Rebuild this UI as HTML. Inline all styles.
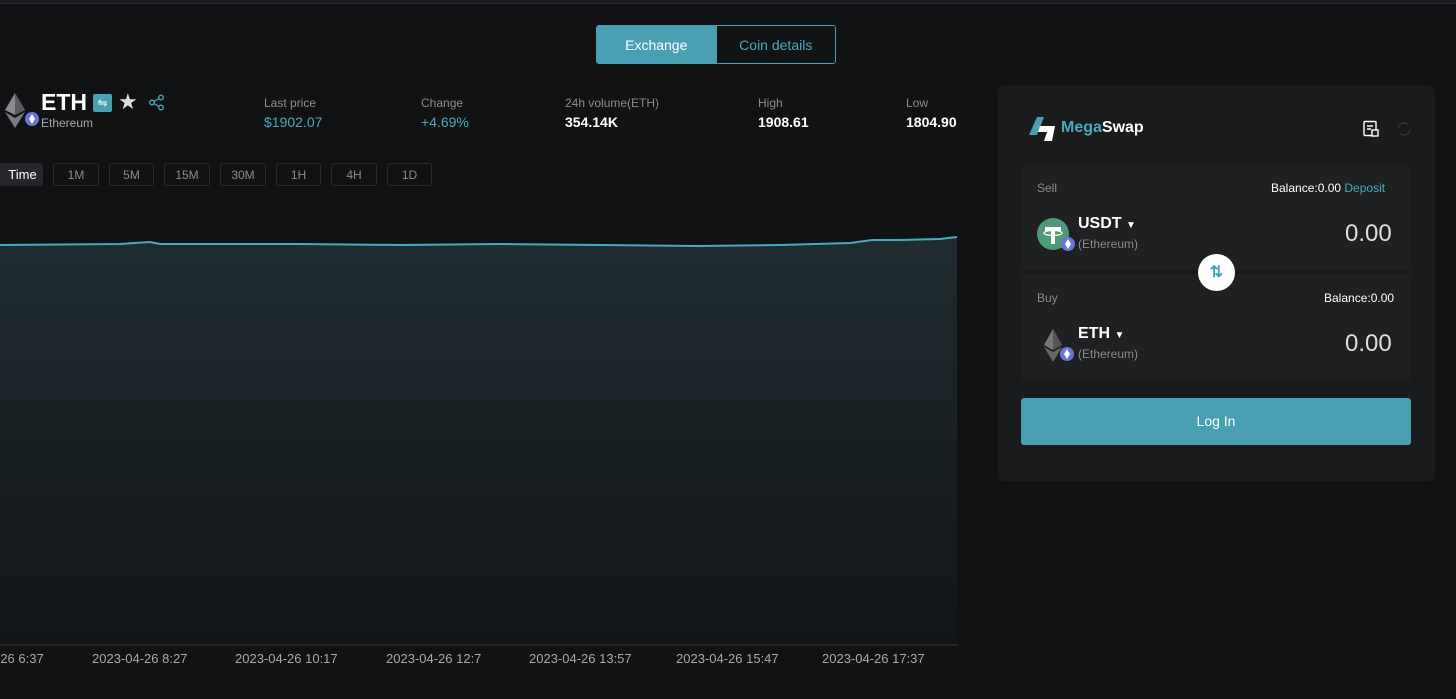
<!DOCTYPE html>
<html><head><meta charset="utf-8"><style>
*{margin:0;padding:0;box-sizing:border-box}
body{width:1456px;height:699px;background:#111214;font-family:"Liberation Sans",sans-serif;color:#fff;position:relative;overflow:hidden}
.a{position:absolute}
.topbar{left:0;top:0;width:1456px;height:4px;background:#1c1d20;border-bottom:1px solid #2a2b2e}
.tabs{left:596px;top:25px;width:240px;height:39px;border:1px solid #4a9fb2;border-radius:3px;overflow:hidden;display:flex;font-size:14px}
.tabs div{flex:1;display:flex;align-items:center;justify-content:center}
.lbl{font-size:12px;color:#8a8b8e}
.val{font-size:14px;font-weight:bold;color:#fff}
.tf{top:163px;height:23px;border:1px solid #2a2b2e;border-radius:3px;font-size:12px;color:#8a8b8e;display:flex;align-items:center;justify-content:center}
.xl{top:651px;font-size:13px;color:#a8a9ac}
.panel{left:998px;top:85px;width:437px;height:396px;background:#1a1b1d;border-radius:6px}
.box{left:1021px;width:390px;background:#1f2022}
</style></head><body>
<div class="a topbar"></div>
<div class="a tabs"><div style="background:#4a9fb2;color:#fff">Exchange</div><div style="color:#4aaabc;background:#121315;border-left:1px solid #4a9fb2">Coin details</div></div>

<svg class="a" style="left:2px;top:92px" width="40" height="38" viewBox="0 0 40 38"><polygon points="13,1 3,18 13,23 23,18" fill="#8a8b8e"/><polygon points="13,1 13,23 23,18" fill="#5a5b5e"/><polygon points="3,20 13,36 23,20 13,26" fill="#7a7b7e"/><circle cx="30" cy="27" r="7" fill="#6b74d8"/><polygon points="30,22 27,27 30,32 33,27" fill="#fff"/></svg>
<div class="a" style="left:41px;top:89px;font-size:23px;font-weight:bold">ETH</div>
<div class="a" style="left:41px;top:116px;font-size:12px;color:#a8a9ac">Ethereum</div>
<div class="a" style="left:93px;top:94px;width:19px;height:18px;background:#4a9fb2;border-radius:2px;color:#fff;font-size:12px;text-align:center;line-height:18px">⇋</div>
<div class="a" style="left:118px;top:89px;font-size:22px;color:#ddd">★</div>
<svg class="a" style="left:148px;top:94px" width="17" height="17" viewBox="0 0 17 17" fill="none" stroke="#4aaabc" stroke-width="1.3"><circle cx="13" cy="3.5" r="2.3"/><circle cx="4" cy="8.5" r="2.3"/><circle cx="13" cy="13.5" r="2.3"/><path d="M6 7.3l5-2.6M6 9.7l5 2.6"/></svg>

<div class="a lbl" style="left:264px;top:96px">Last price</div><div class="a val" style="left:264px;top:114px;color:#4aaabc;font-weight:normal">$1902.07</div>
<div class="a lbl" style="left:421px;top:96px">Change</div><div class="a val" style="left:421px;top:114px;color:#4aaabc;font-weight:normal">+4.69%</div>
<div class="a lbl" style="left:565px;top:96px">24h volume(ETH)</div><div class="a val" style="left:565px;top:114px">354.14K</div>
<div class="a lbl" style="left:758px;top:96px">High</div><div class="a val" style="left:758px;top:114px">1908.61</div>
<div class="a lbl" style="left:906px;top:96px">Low</div><div class="a val" style="left:906px;top:114px">1804.90</div>

<div class="a tf" style="left:-4px;width:47px;background:#26272a;border-color:#26272a;color:#fff;font-size:13px;padding-left:6px">Time</div>
<div class="a tf" style="left:53px;width:46px">1M</div>
<div class="a tf" style="left:109px;width:45px">5M</div>
<div class="a tf" style="left:164px;width:46px">15M</div>
<div class="a tf" style="left:220px;width:46px">30M</div>
<div class="a tf" style="left:276px;width:45px">1H</div>
<div class="a tf" style="left:331px;width:46px">4H</div>
<div class="a tf" style="left:387px;width:45px">1D</div>

<svg class="a" style="left:0;top:230px" width="958" height="416" viewBox="0 0 958 416">
<defs><linearGradient id="g" x1="0" y1="0" x2="0" y2="1"><stop offset="0" stop-color="#1f2c31"/><stop offset="1" stop-color="#131517"/></linearGradient></defs>
<path d="M0 15 L120 14 L150 12 L160 14 L300 14 L400 15 L500 14 L600 15 L700 16 L780 15 L850 13 L872 10 L900 10 L940 9 L957 7 L957 414 L0 414 Z" fill="url(#g)"/>
<path d="M0 15 L120 14 L150 12 L160 14 L300 14 L400 15 L500 14 L600 15 L700 16 L780 15 L850 13 L872 10 L900 10 L940 9 L957 7" fill="none" stroke="#4aaabc" stroke-width="2"/>
<line x1="0" y1="415" x2="958" y2="415" stroke="#3a3b3e" stroke-width="1"/>
</svg>
<div class="a xl" style="left:-4px">-26 6:37</div>
<div class="a xl" style="left:92px">2023-04-26 8:27</div>
<div class="a xl" style="left:235px">2023-04-26 10:17</div>
<div class="a xl" style="left:386px">2023-04-26 12:7</div>
<div class="a xl" style="left:529px">2023-04-26 13:57</div>
<div class="a xl" style="left:676px">2023-04-26 15:47</div>
<div class="a xl" style="left:822px">2023-04-26 17:37</div>

<div class="a panel"></div>
<svg class="a" style="left:1028px;top:116px" width="28" height="26" viewBox="0 0 28 26"><polygon points="9,1 16,1 9,19 1,19" fill="#4a9fb2"/><polygon points="12,10 27,10 24,25 16,25 19,16 10,16" fill="#fff"/></svg>
<div class="a" style="left:1061px;top:119px;font-size:16px;font-weight:bold"><span style="color:#4aaabc">Mega</span>Swap</div>
<svg class="a" style="left:1362px;top:120px" width="18" height="18" viewBox="0 0 18 18" fill="none" stroke="#fff" stroke-width="1.4"><rect x="2" y="1.5" width="12" height="14" rx="1"/><path d="M5 6h6M5 9h4"/><rect x="10" y="10" width="6" height="6" fill="#1a1b1d"/></svg>
<svg class="a" style="left:1395px;top:120px" width="18" height="18" viewBox="0 0 18 18" fill="none" stroke="#333" stroke-width="1.6"><path d="M3 9a6 6 0 0 1 10-4.5M15 9a6 6 0 0 1-10 4.5"/></svg>

<div class="a box" style="top:164px;height:106px;border-radius:6px 6px 0 0"></div>
<div class="a box" style="top:274px;height:107px;border-radius:0 0 6px 6px"></div>
<div class="a" style="left:1037px;top:181px;font-size:12px;color:#8a8b8e">Sell</div>
<div class="a" style="left:1271px;top:181px;font-size:12px">Balance:0.00 <span style="color:#4aaabc">Deposit</span></div>
<svg class="a" style="left:1037px;top:218px" width="40" height="34" viewBox="0 0 40 34"><circle cx="16" cy="16" r="16" fill="#4e9a78"/><path d="M8 9h16v4h-6v13h-4V13H8z" fill="#fff"/><ellipse cx="16" cy="15" rx="9" ry="2.5" fill="none" stroke="#fff" stroke-width="1.3"/><circle cx="31" cy="26" r="7" fill="#6b74d8"/><polygon points="31,21 28,26 31,31 34,26" fill="#fff"/></svg>
<div class="a" style="left:1078px;top:215px;font-size:16px;font-weight:bold">USDT <span style="font-size:10px">▼</span></div>
<div class="a" style="left:1078px;top:237px;font-size:12px;color:#8a8b8e">(Ethereum)</div>
<div class="a" style="left:1345px;top:220px;font-size:24px;color:#ddd">0.00</div>

<div class="a" style="left:1198px;top:254px;width:37px;height:37px;border-radius:50%;background:#fff;color:#4a9fb2;font-size:16px;font-weight:bold;text-align:center;line-height:37px">⇅</div>

<div class="a" style="left:1037px;top:291px;font-size:12px;color:#8a8b8e">Buy</div>
<div class="a" style="left:1324px;top:291px;font-size:12px">Balance:0.00</div>
<svg class="a" style="left:1040px;top:328px" width="40" height="36" viewBox="0 0 40 36"><polygon points="13,1 4,17 13,22 22,17" fill="#777"/><polygon points="13,1 13,22 22,17" fill="#555"/><polygon points="4,19 13,34 22,19 13,24" fill="#666"/><circle cx="27" cy="26" r="7" fill="#6b74d8"/><polygon points="27,21 24,26 27,31 30,26" fill="#fff"/></svg>
<div class="a" style="left:1078px;top:325px;font-size:16px;font-weight:bold">ETH <span style="font-size:10px">▼</span></div>
<div class="a" style="left:1078px;top:347px;font-size:12px;color:#8a8b8e">(Ethereum)</div>
<div class="a" style="left:1345px;top:330px;font-size:24px;color:#ddd">0.00</div>

<div class="a" style="left:1021px;top:398px;width:390px;height:47px;background:#4a9fb2;border-radius:3px;font-size:14px;text-align:center;line-height:47px">Log In</div>
</body></html>
